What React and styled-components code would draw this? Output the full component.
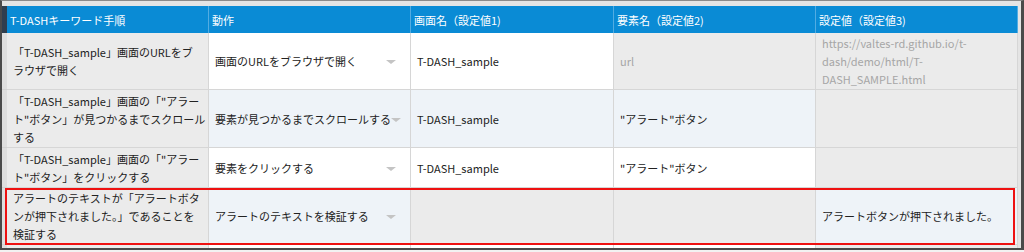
import React from "react";
import styled, { createGlobalStyle, css } from "styled-components";

const GlobalStyle = createGlobalStyle`
  html, body {
    margin: 0;
    padding: 0;
    background: #f2f2f2;
  }
  body {
    font-family: "Noto Sans CJK JP", "Noto Sans", sans-serif;
  }
`;

const Frame = styled.div`
  box-sizing: border-box;
  width: 1024px;
  height: 250px;
  border-top: 1px solid #8a8a8a;
  border-left: 2px solid #4a4a4a;
  border-right: 3px solid #4a4a4a;
  border-bottom: 2px solid #4a4a4a;
  padding: 5px 3px 0 0;
  background: #e4e4e4;
  overflow: hidden;
`;

const Row = styled.div`
  position: relative;
  display: grid;
  grid-template-columns: 5px 202px 202px 203px 202px 202px;
  height: ${(p) => p.$h}px;
  ${(p) =>
    p.$marked &&
    css`
      &::after {
        content: "";
        position: absolute;
        left: 3px;
        right: 3px;
        top: 0;
        bottom: 0;
        border: 2px solid #ee1111;
        pointer-events: none;
      }
    `}
`;

const bgs = {
  grey: "#ebebeb",
  white: "#ffffff",
  blue: "#eef3f8",
};

const Lead = styled.div`
  background: ${(p) => (p.$head ? "#2f3e4e" : "#dedede")};
  border-bottom: 1px solid ${(p) => (p.$head ? "#2f3e4e" : "#d2d2d2")};
`;

const HeadCell = styled.div`
  box-sizing: border-box;
  display: flex;
  align-items: center;
  padding: 0 3px;
  background: #0a8bd5;
  color: #ffffff;
  font-size: 11px;
  border-right: 1px solid #52ace2;
  white-space: nowrap;
`;

const Cell = styled.div`
  box-sizing: border-box;
  display: flex;
  align-items: center;
  padding: 0 6px;
  background: ${(p) => bgs[p.$bg || "white"]};
  color: ${(p) => (p.$muted ? "#a6a6a6" : "#222222")};
  border-right: 1px solid #d6d6d6;
  border-bottom: 1px solid #d6d6d6;
  font-size: 11px;
  line-height: 18px;
  white-space: nowrap;
  overflow: visible;
`;

const Select = styled.div`
  display: flex;
  align-items: center;
  width: 100%;
  padding-right: 8px;
`;

const SelectLabel = styled.span`
  flex: 1;
  min-width: 0;
  white-space: nowrap;
`;

const Caret = styled.span`
  flex-shrink: 0;
  width: 0;
  height: 0;
  border-left: 5px solid transparent;
  border-right: 5px solid transparent;
  border-top: 4px solid #c4c4c4;
  margin-top: 2px;
`;

const headers = [
  "T-DASHキーワード手順",
  "動作",
  "画面名（設定値1)",
  "要素名（設定値2)",
  "設定値（設定値3)",
];

const rows = [
  {
    h: 57,
    step: (
      <>
        「T-DASH_sample」画面のURLをブ
        <br />
        ラウザで開く
      </>
    ),
    action: "画面のURLをブラウザで開く",
    bg: ["white", "white", "grey", "grey"],
    screen: "T-DASH_sample",
    element: "url",
    elementMuted: true,
    value: (
      <>
        https://valtes-rd.github.io/t-
        <br />
        dash/demo/html/T-
        <br />
        DASH_SAMPLE.html
      </>
    ),
    valueMuted: true,
  },
  {
    h: 58,
    step: (
      <>
        「T-DASH_sample」画面の「"アラー
        <br />
        ト"ボタン」が見つかるまでスクロール
        <br />
        する
      </>
    ),
    action: "要素が見つかるまでスクロールする",
    bg: ["blue", "blue", "blue", "grey"],
    screen: "T-DASH_sample",
    element: "\"アラート\"ボタン",
    value: "",
  },
  {
    h: 40,
    step: (
      <>
        「T-DASH_sample」画面の「"アラー
        <br />
        ト"ボタン」をクリックする
      </>
    ),
    action: "要素をクリックする",
    bg: ["white", "white", "white", "grey"],
    screen: "T-DASH_sample",
    element: "\"アラート\"ボタン",
    value: "",
  },
  {
    h: 57,
    marked: true,
    step: (
      <>
        アラートのテキストが「アラートボタ
        <br />
        ンが押下されました。」であることを
        <br />
        検証する
      </>
    ),
    action: "アラートのテキストを検証する",
    bg: ["blue", "grey", "grey", "blue"],
    screen: "",
    element: "",
    value: "アラートボタンが押下されました。",
  },
  {
    h: 12,
    step: "",
    action: null,
    bg: ["white", "white", "white", "grey"],
    screen: "",
    element: "",
    value: "",
  },
];

export default function App() {
  return (
    <>
      <GlobalStyle />
      <Frame>
        <Row $h={27}>
          <Lead $head />
          {headers.map((h) => (
            <HeadCell key={h}>{h}</HeadCell>
          ))}
        </Row>
        {rows.map((r, i) => (
          <Row key={i} $h={r.h} $marked={r.marked}>
            <Lead />
            <Cell $bg="grey">
              <span>{r.step}</span>
            </Cell>
            <Cell $bg={r.bg[0]}>
              {r.action !== null && (
                <Select>
                  <SelectLabel>{r.action}</SelectLabel>
                  <Caret />
                </Select>
              )}
            </Cell>
            <Cell $bg={r.bg[1]}>{r.screen}</Cell>
            <Cell $bg={r.bg[2]} $muted={r.elementMuted}>
              {r.element}
            </Cell>
            <Cell $bg={r.bg[3]} $muted={r.valueMuted}>
              <span>{r.value}</span>
            </Cell>
          </Row>
        ))}
      </Frame>
    </>
  );
}
